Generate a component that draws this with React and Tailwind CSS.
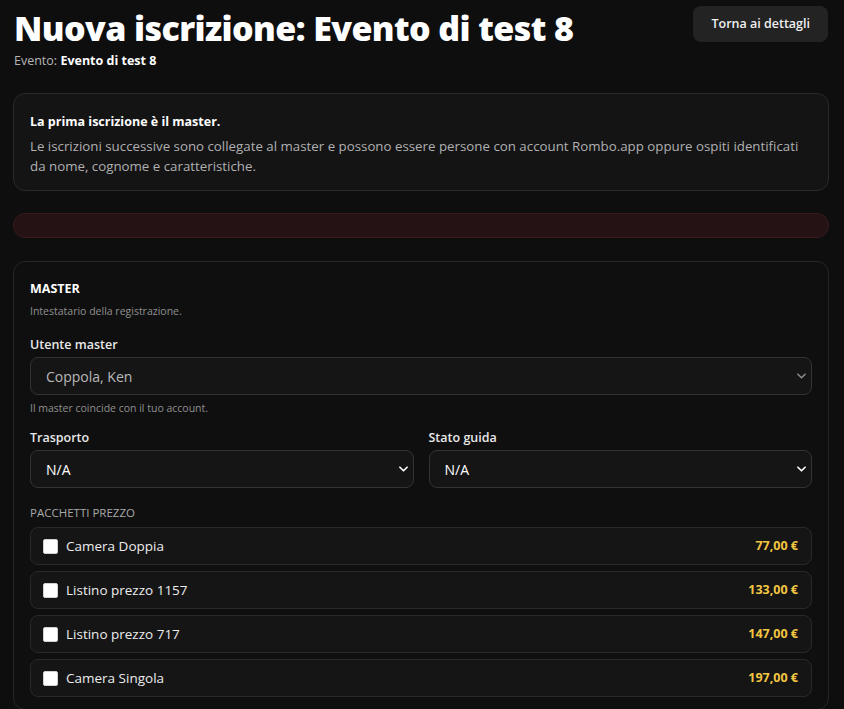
import React, { useState } from "react";

const packages = [
  { id: 1, name: "Camera Doppia", price: "77,00 €" },
  { id: 2, name: "Listino prezzo 1157", price: "133,00 €" },
  { id: 3, name: "Listino prezzo 717", price: "147,00 €" },
  { id: 4, name: "Camera Singola", price: "197,00 €" },
];

function Chevron({ className }) {
  return (
    <svg viewBox="0 0 10 6" className={className} fill="none" stroke="currentColor" strokeWidth="1.8" strokeLinecap="round" strokeLinejoin="round">
      <path d="M1 1l4 4 4-4" />
    </svg>
  );
}

function SelectBox({ value, options, muted, onChange }) {
  return (
    <div className="relative">
      <select
        value={value}
        onChange={(e) => onChange && onChange(e.target.value)}
        className={`w-full h-[38px] appearance-none rounded-lg border border-[#333335] bg-[#151516] pl-[15px] pr-8 text-[14px] outline-none ${muted ? "text-[#b9b9b9]" : "text-white"}`}
      >
        {options.map((o) => (
          <option key={o}>{o}</option>
        ))}
      </select>
      <Chevron className={`pointer-events-none absolute right-[6px] top-1/2 -translate-y-1/2 w-[9px] h-[6px] ${muted ? "text-[#8a8a8a]" : "text-white"}`} />
    </div>
  );
}

export default function App() {
  const [master, setMaster] = useState("Coppola, Ken");
  const [transport, setTransport] = useState("N/A");
  const [driver, setDriver] = useState("N/A");
  const [selected, setSelected] = useState({});

  const toggle = (id) => setSelected((prev) => ({ ...prev, [id]: !prev[id] }));

  return (
    <div className="min-h-[709px] bg-[#0e0e0f] pl-[13px] pr-[15px] pt-[6px] text-white" style={{ fontFamily: "'Open Sans', 'Noto Sans', sans-serif" }}>
      <header className="flex items-start justify-between">
        <div className="pl-[1px]">
          <h1 className="text-[34px] font-extrabold leading-[44px] tracking-[-0.6px]">Nuova iscrizione: Evento di test 8</h1>
          <p className="mt-[2px] text-[12.5px] leading-[18px] text-[#b5b5b5]">
            Evento: <span className="font-bold text-white">Evento di test 8</span>
          </p>
        </div>
        <button className="mr-[1px] h-[36px] rounded-lg bg-[#232324] px-[18px] text-[12.5px] font-semibold text-[#f0f0f0]">
          Torna ai dettagli
        </button>
      </header>

      <section className="mt-[23px] rounded-xl border border-[#2a2a2c] bg-[#141415] px-[16px] pt-[18px] pb-[14px]">
        <p className="text-[12.5px] font-bold leading-[20px]">La prima iscrizione è il master.</p>
        <p className="mt-[4px] text-[13.3px] leading-[20px] text-[#b0b0b0]">
          Le iscrizioni successive sono collegate al master e possono essere persone con account Rombo.app oppure ospiti identificati da nome, cognome e caratteristiche.
        </p>
      </section>

      <div className="mt-[22px] h-[25px] rounded-xl border border-[#3a1a1d] bg-[#241215]" />

      <section className="mt-[23px] rounded-xl border border-[#262628] bg-[#0f0f10] px-[16px] pt-[17px] pb-[12px]">
        <h2 className="text-[12.5px] font-bold leading-[20px]">MASTER</h2>
        <p className="mt-[3px] text-[10.5px] leading-[18px] text-[#8f8f8f]">Intestatario della registrazione.</p>

        <label className="mt-[16px] block text-[12.5px] font-semibold leading-[18px] text-[#e8e8e8]">Utente master</label>
        <div className="mt-[3px]">
          <SelectBox value={master} options={["Coppola, Ken"]} muted onChange={setMaster} />
        </div>
        <p className="mt-[5px] text-[10.5px] leading-[16px] text-[#8f8f8f]">Il master coincide con il tuo account.</p>

        <div className="mt-[13px] grid grid-cols-2 gap-[15px]">
          <div>
            <label className="block text-[12.5px] font-semibold leading-[18px] text-[#e8e8e8]">Trasporto</label>
            <div className="mt-[3px]">
              <SelectBox value={transport} options={["N/A", "Auto propria", "Passaggio"]} onChange={setTransport} />
            </div>
          </div>
          <div>
            <label className="block text-[12.5px] font-semibold leading-[18px] text-[#e8e8e8]">Stato guida</label>
            <div className="mt-[3px]">
              <SelectBox value={driver} options={["N/A", "Guida", "Passeggero"]} onChange={setDriver} />
            </div>
          </div>
        </div>

        <h3 className="mt-[17px] text-[11.5px] leading-[16px] text-[#a8a8a8]">PACCHETTI PREZZO</h3>
        <div className="mt-[6px] flex flex-col gap-[6px]">
          {packages.map((p) => (
            <label
              key={p.id}
              className="flex h-[38px] cursor-pointer items-center justify-between rounded-lg border border-[#29292b] bg-[#151516] pl-[12px] pr-[13px]"
            >
              <span className="flex items-center gap-[8px]">
                <input
                  type="checkbox"
                  checked={!!selected[p.id]}
                  onChange={() => toggle(p.id)}
                  className="h-[15px] w-[15px] appearance-none rounded-[2px] border border-[#d0d0d0] bg-white checked:bg-[#3b82f6]"
                />
                <span className="text-[13.5px] text-[#ececec]">{p.name}</span>
              </span>
              <span className="text-[12.5px] font-bold text-[#f2c641]">{p.price}</span>
            </label>
          ))}
        </div>
      </section>
    </div>
  );
}
